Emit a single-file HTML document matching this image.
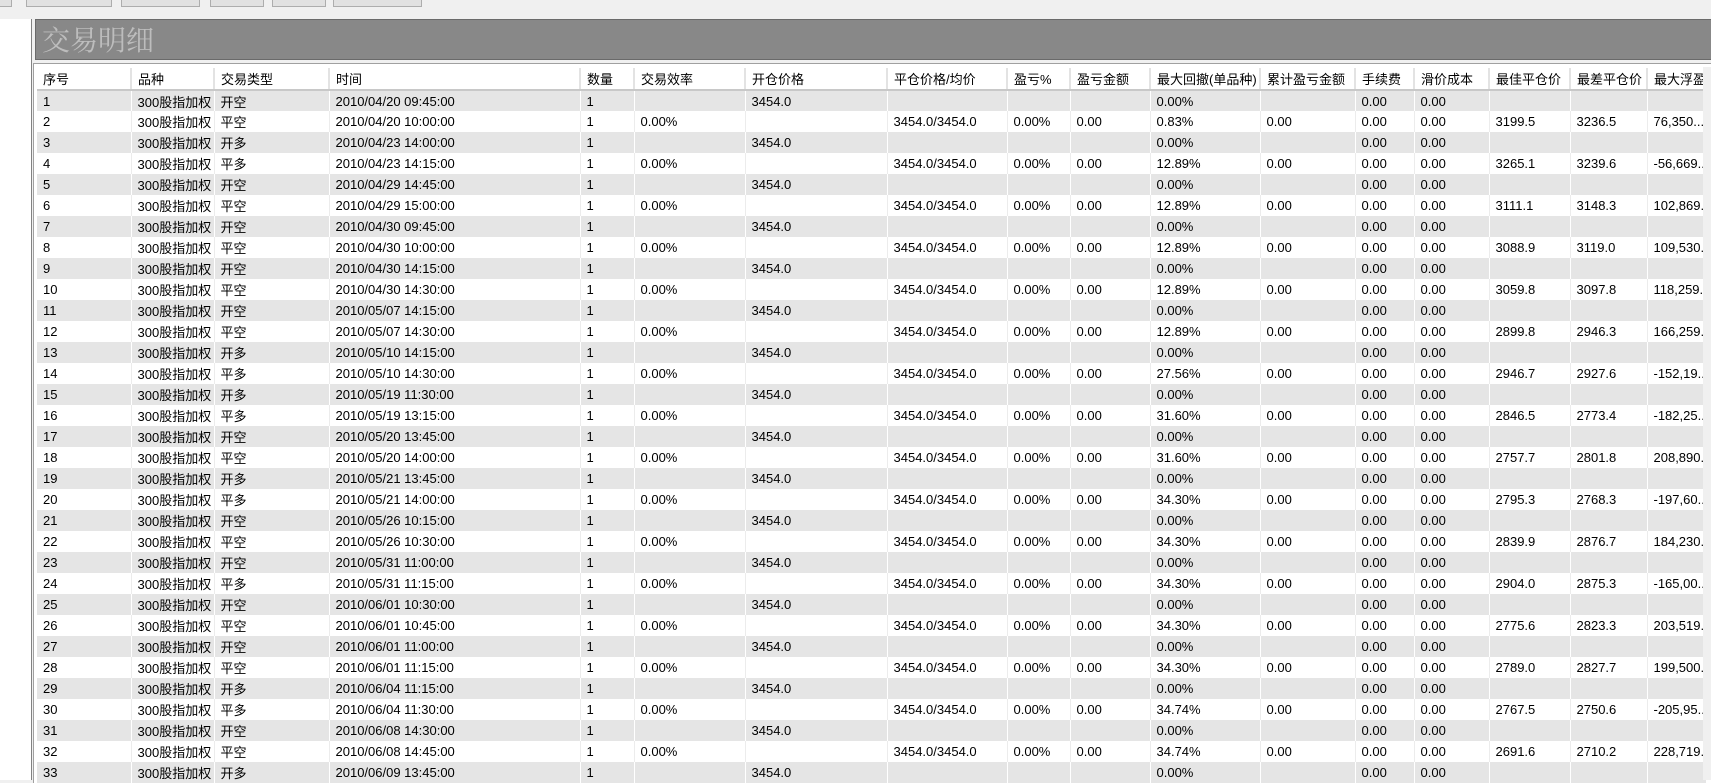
<!DOCTYPE html>
<html><head><meta charset="utf-8"><style>
*{margin:0;padding:0;box-sizing:border-box}
body{width:1711px;height:780px;overflow:hidden;background:#f0f0f0;position:relative;font-family:"Liberation Sans","Noto Sans CJK SC",sans-serif;font-size:13px;color:#000}
.btn{position:absolute;top:-3px;height:10px;border:1px solid #adadad;background:#e1e1e1}
.left{position:absolute;left:0;top:19px;width:32px;height:761px;background:#fff;border-right:1px solid #828282}
.title{position:absolute;left:35px;top:19px;width:1680px;height:41px;background:#888;border:1px solid #6a6a6a;font-family:"Noto Serif CJK SC","Liberation Serif",serif;font-size:28px;color:#bdbdbd;padding-left:6px;line-height:38px}
.wrap{position:absolute;left:33px;top:63px;width:1680px;height:720px;background:#fff;border-top:1px solid #a0a0a0;border-left:1px solid #a0a0a0}
table{position:absolute;left:3px;top:4px;border-collapse:collapse;table-layout:fixed;width:1669px}
td,th{height:21px;padding:0 0 0 6px;white-space:nowrap;overflow:hidden;font-weight:normal;text-align:left;border-right:1px solid #fff}
th{height:22px;border-right:2px solid #e3e3e3;border-bottom:2px solid #c8c8c8;background:#fff}
tr:nth-child(odd) td{background:#e5e5e5}
tr:nth-child(even) td{border-right:1px solid #ececec}
.sb{position:absolute;left:1703px;top:67px;width:8px;height:713px;background:#f0f0f0}
</style></head><body>
<div class="btn" style="left:-2px;width:14px"></div>
<div class="btn" style="left:26px;width:86px"></div>
<div class="btn" style="left:121px;width:79px"></div>
<div class="btn" style="left:210px;width:54px"></div>
<div class="btn" style="left:272px;width:54px"></div>
<div class="btn" style="left:333px;width:89px"></div>
<div class="left"></div>
<div class="title">交易明细</div>
<div class="wrap">
<table>
<colgroup><col style="width:94px"><col style="width:83px"><col style="width:115px"><col style="width:251px"><col style="width:54px"><col style="width:111px"><col style="width:142px"><col style="width:120px"><col style="width:63px"><col style="width:80px"><col style="width:110px"><col style="width:95px"><col style="width:59px"><col style="width:75px"><col style="width:81px"><col style="width:77px"><col style="width:59px"></colgroup>
<thead><tr><th>序号</th><th>品种</th><th>交易类型</th><th>时间</th><th>数量</th><th>交易效率</th><th>开仓价格</th><th>平仓价格/均价</th><th>盈亏%</th><th>盈亏金额</th><th>最大回撤(单品种)</th><th>累计盈亏金额</th><th>手续费</th><th>滑价成本</th><th>最佳平仓价</th><th>最差平仓价</th><th>最大浮盈</th></tr></thead>
<tbody>
<tr><td>1</td><td>300股指加权</td><td>开空</td><td>2010/04/20 09:45:00</td><td>1</td><td></td><td>3454.0</td><td></td><td></td><td></td><td>0.00%</td><td></td><td>0.00</td><td>0.00</td><td></td><td></td><td></td></tr>
<tr><td>2</td><td>300股指加权</td><td>平空</td><td>2010/04/20 10:00:00</td><td>1</td><td>0.00%</td><td></td><td>3454.0/3454.0</td><td>0.00%</td><td>0.00</td><td>0.83%</td><td>0.00</td><td>0.00</td><td>0.00</td><td>3199.5</td><td>3236.5</td><td>76,350...</td></tr>
<tr><td>3</td><td>300股指加权</td><td>开多</td><td>2010/04/23 14:00:00</td><td>1</td><td></td><td>3454.0</td><td></td><td></td><td></td><td>0.00%</td><td></td><td>0.00</td><td>0.00</td><td></td><td></td><td></td></tr>
<tr><td>4</td><td>300股指加权</td><td>平多</td><td>2010/04/23 14:15:00</td><td>1</td><td>0.00%</td><td></td><td>3454.0/3454.0</td><td>0.00%</td><td>0.00</td><td>12.89%</td><td>0.00</td><td>0.00</td><td>0.00</td><td>3265.1</td><td>3239.6</td><td>-56,669...</td></tr>
<tr><td>5</td><td>300股指加权</td><td>开空</td><td>2010/04/29 14:45:00</td><td>1</td><td></td><td>3454.0</td><td></td><td></td><td></td><td>0.00%</td><td></td><td>0.00</td><td>0.00</td><td></td><td></td><td></td></tr>
<tr><td>6</td><td>300股指加权</td><td>平空</td><td>2010/04/29 15:00:00</td><td>1</td><td>0.00%</td><td></td><td>3454.0/3454.0</td><td>0.00%</td><td>0.00</td><td>12.89%</td><td>0.00</td><td>0.00</td><td>0.00</td><td>3111.1</td><td>3148.3</td><td>102,869...</td></tr>
<tr><td>7</td><td>300股指加权</td><td>开空</td><td>2010/04/30 09:45:00</td><td>1</td><td></td><td>3454.0</td><td></td><td></td><td></td><td>0.00%</td><td></td><td>0.00</td><td>0.00</td><td></td><td></td><td></td></tr>
<tr><td>8</td><td>300股指加权</td><td>平空</td><td>2010/04/30 10:00:00</td><td>1</td><td>0.00%</td><td></td><td>3454.0/3454.0</td><td>0.00%</td><td>0.00</td><td>12.89%</td><td>0.00</td><td>0.00</td><td>0.00</td><td>3088.9</td><td>3119.0</td><td>109,530...</td></tr>
<tr><td>9</td><td>300股指加权</td><td>开空</td><td>2010/04/30 14:15:00</td><td>1</td><td></td><td>3454.0</td><td></td><td></td><td></td><td>0.00%</td><td></td><td>0.00</td><td>0.00</td><td></td><td></td><td></td></tr>
<tr><td>10</td><td>300股指加权</td><td>平空</td><td>2010/04/30 14:30:00</td><td>1</td><td>0.00%</td><td></td><td>3454.0/3454.0</td><td>0.00%</td><td>0.00</td><td>12.89%</td><td>0.00</td><td>0.00</td><td>0.00</td><td>3059.8</td><td>3097.8</td><td>118,259...</td></tr>
<tr><td>11</td><td>300股指加权</td><td>开空</td><td>2010/05/07 14:15:00</td><td>1</td><td></td><td>3454.0</td><td></td><td></td><td></td><td>0.00%</td><td></td><td>0.00</td><td>0.00</td><td></td><td></td><td></td></tr>
<tr><td>12</td><td>300股指加权</td><td>平空</td><td>2010/05/07 14:30:00</td><td>1</td><td>0.00%</td><td></td><td>3454.0/3454.0</td><td>0.00%</td><td>0.00</td><td>12.89%</td><td>0.00</td><td>0.00</td><td>0.00</td><td>2899.8</td><td>2946.3</td><td>166,259...</td></tr>
<tr><td>13</td><td>300股指加权</td><td>开多</td><td>2010/05/10 14:15:00</td><td>1</td><td></td><td>3454.0</td><td></td><td></td><td></td><td>0.00%</td><td></td><td>0.00</td><td>0.00</td><td></td><td></td><td></td></tr>
<tr><td>14</td><td>300股指加权</td><td>平多</td><td>2010/05/10 14:30:00</td><td>1</td><td>0.00%</td><td></td><td>3454.0/3454.0</td><td>0.00%</td><td>0.00</td><td>27.56%</td><td>0.00</td><td>0.00</td><td>0.00</td><td>2946.7</td><td>2927.6</td><td>-152,19...</td></tr>
<tr><td>15</td><td>300股指加权</td><td>开多</td><td>2010/05/19 11:30:00</td><td>1</td><td></td><td>3454.0</td><td></td><td></td><td></td><td>0.00%</td><td></td><td>0.00</td><td>0.00</td><td></td><td></td><td></td></tr>
<tr><td>16</td><td>300股指加权</td><td>平多</td><td>2010/05/19 13:15:00</td><td>1</td><td>0.00%</td><td></td><td>3454.0/3454.0</td><td>0.00%</td><td>0.00</td><td>31.60%</td><td>0.00</td><td>0.00</td><td>0.00</td><td>2846.5</td><td>2773.4</td><td>-182,25...</td></tr>
<tr><td>17</td><td>300股指加权</td><td>开空</td><td>2010/05/20 13:45:00</td><td>1</td><td></td><td>3454.0</td><td></td><td></td><td></td><td>0.00%</td><td></td><td>0.00</td><td>0.00</td><td></td><td></td><td></td></tr>
<tr><td>18</td><td>300股指加权</td><td>平空</td><td>2010/05/20 14:00:00</td><td>1</td><td>0.00%</td><td></td><td>3454.0/3454.0</td><td>0.00%</td><td>0.00</td><td>31.60%</td><td>0.00</td><td>0.00</td><td>0.00</td><td>2757.7</td><td>2801.8</td><td>208,890...</td></tr>
<tr><td>19</td><td>300股指加权</td><td>开多</td><td>2010/05/21 13:45:00</td><td>1</td><td></td><td>3454.0</td><td></td><td></td><td></td><td>0.00%</td><td></td><td>0.00</td><td>0.00</td><td></td><td></td><td></td></tr>
<tr><td>20</td><td>300股指加权</td><td>平多</td><td>2010/05/21 14:00:00</td><td>1</td><td>0.00%</td><td></td><td>3454.0/3454.0</td><td>0.00%</td><td>0.00</td><td>34.30%</td><td>0.00</td><td>0.00</td><td>0.00</td><td>2795.3</td><td>2768.3</td><td>-197,60...</td></tr>
<tr><td>21</td><td>300股指加权</td><td>开空</td><td>2010/05/26 10:15:00</td><td>1</td><td></td><td>3454.0</td><td></td><td></td><td></td><td>0.00%</td><td></td><td>0.00</td><td>0.00</td><td></td><td></td><td></td></tr>
<tr><td>22</td><td>300股指加权</td><td>平空</td><td>2010/05/26 10:30:00</td><td>1</td><td>0.00%</td><td></td><td>3454.0/3454.0</td><td>0.00%</td><td>0.00</td><td>34.30%</td><td>0.00</td><td>0.00</td><td>0.00</td><td>2839.9</td><td>2876.7</td><td>184,230...</td></tr>
<tr><td>23</td><td>300股指加权</td><td>开空</td><td>2010/05/31 11:00:00</td><td>1</td><td></td><td>3454.0</td><td></td><td></td><td></td><td>0.00%</td><td></td><td>0.00</td><td>0.00</td><td></td><td></td><td></td></tr>
<tr><td>24</td><td>300股指加权</td><td>平多</td><td>2010/05/31 11:15:00</td><td>1</td><td>0.00%</td><td></td><td>3454.0/3454.0</td><td>0.00%</td><td>0.00</td><td>34.30%</td><td>0.00</td><td>0.00</td><td>0.00</td><td>2904.0</td><td>2875.3</td><td>-165,00...</td></tr>
<tr><td>25</td><td>300股指加权</td><td>开空</td><td>2010/06/01 10:30:00</td><td>1</td><td></td><td>3454.0</td><td></td><td></td><td></td><td>0.00%</td><td></td><td>0.00</td><td>0.00</td><td></td><td></td><td></td></tr>
<tr><td>26</td><td>300股指加权</td><td>平空</td><td>2010/06/01 10:45:00</td><td>1</td><td>0.00%</td><td></td><td>3454.0/3454.0</td><td>0.00%</td><td>0.00</td><td>34.30%</td><td>0.00</td><td>0.00</td><td>0.00</td><td>2775.6</td><td>2823.3</td><td>203,519...</td></tr>
<tr><td>27</td><td>300股指加权</td><td>开空</td><td>2010/06/01 11:00:00</td><td>1</td><td></td><td>3454.0</td><td></td><td></td><td></td><td>0.00%</td><td></td><td>0.00</td><td>0.00</td><td></td><td></td><td></td></tr>
<tr><td>28</td><td>300股指加权</td><td>平空</td><td>2010/06/01 11:15:00</td><td>1</td><td>0.00%</td><td></td><td>3454.0/3454.0</td><td>0.00%</td><td>0.00</td><td>34.30%</td><td>0.00</td><td>0.00</td><td>0.00</td><td>2789.0</td><td>2827.7</td><td>199,500...</td></tr>
<tr><td>29</td><td>300股指加权</td><td>开多</td><td>2010/06/04 11:15:00</td><td>1</td><td></td><td>3454.0</td><td></td><td></td><td></td><td>0.00%</td><td></td><td>0.00</td><td>0.00</td><td></td><td></td><td></td></tr>
<tr><td>30</td><td>300股指加权</td><td>平多</td><td>2010/06/04 11:30:00</td><td>1</td><td>0.00%</td><td></td><td>3454.0/3454.0</td><td>0.00%</td><td>0.00</td><td>34.74%</td><td>0.00</td><td>0.00</td><td>0.00</td><td>2767.5</td><td>2750.6</td><td>-205,95...</td></tr>
<tr><td>31</td><td>300股指加权</td><td>开空</td><td>2010/06/08 14:30:00</td><td>1</td><td></td><td>3454.0</td><td></td><td></td><td></td><td>0.00%</td><td></td><td>0.00</td><td>0.00</td><td></td><td></td><td></td></tr>
<tr><td>32</td><td>300股指加权</td><td>平空</td><td>2010/06/08 14:45:00</td><td>1</td><td>0.00%</td><td></td><td>3454.0/3454.0</td><td>0.00%</td><td>0.00</td><td>34.74%</td><td>0.00</td><td>0.00</td><td>0.00</td><td>2691.6</td><td>2710.2</td><td>228,719...</td></tr>
<tr><td>33</td><td>300股指加权</td><td>开多</td><td>2010/06/09 13:45:00</td><td>1</td><td></td><td>3454.0</td><td></td><td></td><td></td><td>0.00%</td><td></td><td>0.00</td><td>0.00</td><td></td><td></td><td></td></tr>
</tbody></table>
</div>
<div class="sb"></div>
</body></html>
